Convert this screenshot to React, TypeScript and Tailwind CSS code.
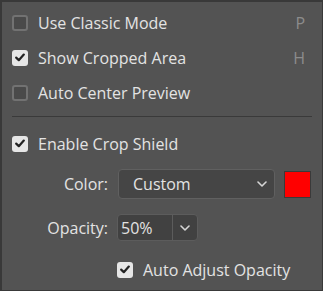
import React from 'react';

const Chevron: React.FC = () => (
    <svg width="10" height="6" viewBox="0 0 10 6" fill="none">
        <path d="M1 1l4 4 4-4" stroke="#d6d6d6" strokeWidth="1.6" strokeLinecap="round" strokeLinejoin="round" />
    </svg>
);

const Checkbox: React.FC<{ checked?: boolean }> = ({ checked }) =>
    checked ? (
        <div className="w-4 h-4 rounded-[3px] bg-[#e6e6e6] flex items-center justify-center shrink-0">
            <svg width="10" height="9" viewBox="0 0 10 9" fill="none">
                <path d="M1.2 4.6l2.6 2.6 5-5.6" stroke="#222" strokeWidth="2.2" strokeLinecap="round" strokeLinejoin="round" />
            </svg>
        </div>
    ) : (
        <div className="w-4 h-4 rounded-[3px] border-2 border-[#727272] bg-[#4a4a4a] shrink-0" />
    );

const Row: React.FC<{ label: string; checked?: boolean; shortcut?: string }> = ({ label, checked, shortcut }) => (
    <div className="h-[35px] flex items-center pl-[10px] pr-[17px]">
        <Checkbox checked={checked} />
        <span className="ml-[10px] flex-1">{label}</span>
        {shortcut && <span className="text-[#8c8c8c]">{shortcut}</span>}
    </div>
);

const App: React.FC = () => {
    return (
        <div
            className="w-[323px] h-[291px] bg-[#535353] border border-l-2 border-t-2 border-[#393939] text-[#e3e3e3] text-[16px] overflow-hidden"
            style={{ fontFamily: '"Open Sans", "Noto Sans", sans-serif' }}
        >
            <div className="pt-[3px]">
                <Row label="Use Classic Mode" shortcut="P" />
                <Row label="Show Cropped Area" checked shortcut="H" />
                <Row label="Auto Center Preview" />
            </div>
            <div className="mt-[6px] mx-[10px] h-px bg-[#3a3a3a]" />
            <div className="mt-[9px]">
                <Row label="Enable Crop Shield" checked />
            </div>
            <div className="mt-[8px] flex items-center">
                <div className="w-[106px] text-right">Color:</div>
                <div className="ml-[10px] w-[157px] h-[30px] rounded-[4px] border border-[#606060] bg-[#454545] flex items-center pl-[14px] pr-[7px]">
                    <span className="flex-1">Custom</span>
                    <Chevron />
                </div>
                <div className="ml-[9px] w-[27px] h-[27px] bg-[#ff0000] border border-[#3a3a3a]" />
            </div>
            <div className="mt-[15px] flex items-center">
                <div className="w-[106px] text-right">Opacity:</div>
                <div className="ml-[9px] w-[81px] h-[27px] rounded-[4px] border border-[#5c5c5c] bg-[#414141] flex items-center">
                    <span className="w-[54px] pl-[3px]">50%</span>
                    <div className="w-px self-stretch bg-[#5c5c5c]" />
                    <div className="flex-1 flex items-center justify-center">
                        <Chevron />
                    </div>
                </div>
            </div>
            <div className="mt-[11px] h-[35px] flex items-center pl-[115px]">
                <Checkbox checked />
                <span className="ml-[10px]">Auto Adjust Opacity</span>
            </div>
        </div>
    );
};

export default App;
